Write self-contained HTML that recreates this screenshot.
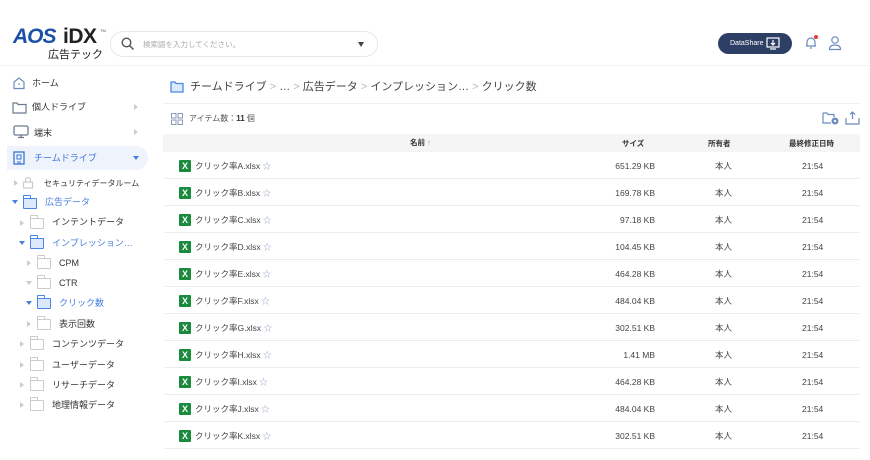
<!DOCTYPE html>
<html><head><meta charset="utf-8"><style>
*{margin:0;padding:0;box-sizing:border-box}
body{width:870px;height:460px;background:#fff;font-family:"Liberation Sans","Noto Sans CJK JP",sans-serif;position:relative;overflow:hidden;color:#333}
.a{position:absolute;white-space:nowrap}
.s{font-size:9px;color:#333;line-height:12px}
.row{position:absolute;left:165px;width:694px;height:27px;border-bottom:1px solid #ececec;font-size:8.5px;color:#444}
.row div{line-height:12px}
.row .x{position:absolute;left:14px;top:8px;width:12px;height:12px;background:#1a8a3c;color:#fff;font-size:9px;font-weight:bold;text-align:center;border-radius:1px}
.row .n{position:absolute;left:30px;top:8px}
.row .sz{position:absolute;right:204px;top:8px}
.row .o{position:absolute;left:550px;top:8px}
.row .t{position:absolute;left:637px;top:8px}
.tri{position:absolute;width:0;height:0}
.tr{border-left:4px solid #ccc;border-top:3px solid transparent;border-bottom:3px solid transparent}
.td{border-top:4px solid #4a7de0;border-left:3px solid transparent;border-right:3px solid transparent}
.tdg{border-top:4px solid #ccc;border-left:3px solid transparent;border-right:3px solid transparent}
.fd{position:absolute;width:14px;height:11px;border:1.3px solid #ccc;border-radius:1px}
.fd:before{content:"";position:absolute;left:-1px;top:-4px;width:6px;height:3px;border:1.3px solid #ccc;border-bottom:none;border-radius:1px 1px 0 0}
.fb{border-color:#4a86e8;background:#dce8fb}
.fb:before{border-color:#4a86e8}
</style></head><body>
<!-- logo -->
<div class="a" style="left:13px;top:26px;font-size:21px;line-height:22px;font-weight:bold;letter-spacing:-1px;font-style:italic;color:#1c4fa8">AOS</div>
<div class="a" style="left:63px;top:26px;font-size:21px;line-height:22px;font-weight:bold;letter-spacing:-0.5px;color:#222">iDX</div>
<div class="a" style="left:100px;top:28px;font-size:4px;color:#555">TM</div>
<div class="a" style="left:48px;top:49px;font-size:11px;line-height:13px;color:#222">広告テック</div>
<!-- search -->
<div class="a" style="left:110px;top:31px;width:268px;height:26px;border:1px solid #e8e8e8;border-radius:13px"></div>
<svg class="a" style="left:121px;top:37px" width="14" height="14" viewBox="0 0 14 14"><circle cx="5.5" cy="5.5" r="4.3" fill="none" stroke="#555" stroke-width="1.4"/><path d="M8.7 8.7L12.5 12.5" stroke="#555" stroke-width="1.5"/></svg>
<div class="a" style="left:143px;top:39px;font-size:7.5px;color:#aaa">検索語を入力してください。</div>
<div class="tri" style="left:358px;top:42px;border-top:5px solid #444;border-left:3.5px solid transparent;border-right:3.5px solid transparent"></div>
<!-- datashare -->
<div class="a" style="left:718px;top:33px;width:74px;height:21px;background:#2e3f66;border-radius:11px"></div>
<div class="a" style="left:730px;top:39px;font-size:7px;line-height:9px;color:#fff">DataShare</div>
<svg class="a" style="left:766px;top:37px" width="14" height="13" viewBox="0 0 14 13"><rect x="1" y="1" width="12" height="9" fill="none" stroke="#fff" stroke-width="1.2"/><path d="M7 3v5M5 6l2 2 2-2M4 12h6" stroke="#fff" stroke-width="1.2" fill="none"/></svg>
<svg class="a" style="left:803px;top:34px" width="16" height="16" viewBox="0 0 16 16"><path d="M4 12V8a4 4 0 018 0v4M3 12h10M7 14h2" fill="none" stroke="#6b8bbf" stroke-width="1.2"/><circle cx="13" cy="3" r="2" fill="#e53935"/></svg>
<svg class="a" style="left:828px;top:35px" width="14" height="16" viewBox="0 0 14 16"><circle cx="7" cy="5" r="3.2" fill="none" stroke="#6b8bbf" stroke-width="1.2"/><path d="M1.5 14.5c0-3.5 2.5-4.5 5.5-4.5s5.5 1 5.5 4.5z" fill="none" stroke="#6b8bbf" stroke-width="1.2"/></svg>
<div class="a" style="left:0;top:65px;width:870px;height:1px;background:#f3f3f3"></div>
<!-- sidebar -->
<svg class="a" style="left:12px;top:76px" width="14" height="14" viewBox="0 0 14 14"><path d="M2 6L7 2l5 4v6.5H2z" fill="none" stroke="#6b8bbf" stroke-width="1.2"/><path d="M6 8h2" stroke="#6b8bbf"/></svg>
<div class="a s" style="left:32px;top:77px">ホーム</div>
<svg class="a" style="left:12px;top:101px" width="15" height="13" viewBox="0 0 15 13"><path d="M1 2h4l1 1.5h8V12H1z" fill="none" stroke="#6b7a90" stroke-width="1.2"/></svg>
<div class="a s" style="left:32px;top:101px">個人ドライブ</div>
<div class="tri tr" style="left:134px;top:104px"></div>
<svg class="a" style="left:13px;top:125px" width="16" height="14" viewBox="0 0 16 14"><rect x="1" y="1" width="14" height="9" rx="1.5" fill="none" stroke="#6b7a90" stroke-width="1.3"/><path d="M5 12.5h6M8 10v2.5" stroke="#6b7a90" stroke-width="1.3"/></svg>
<div class="a s" style="left:34px;top:127px">端末</div>
<div class="tri tr" style="left:134px;top:129px"></div>
<div class="a" style="left:7px;top:146px;width:141px;height:24px;background:#eef3fc;border-radius:0 12px 12px 0"></div>
<svg class="a" style="left:13px;top:151px" width="12" height="14" viewBox="0 0 12 14"><rect x="1" y="1" width="10" height="12" fill="none" stroke="#3a72d8" stroke-width="1.3"/><rect x="4" y="4" width="4" height="4" fill="none" stroke="#3a72d8"/><path d="M5 10v3M7 10v3" stroke="#3a72d8"/></svg>
<div class="a s" style="left:34px;top:152px;color:#3a72d8">チームドライブ</div>
<div class="tri td" style="left:133px;top:156px"></div>
<div class="tri tr" style="left:14px;top:180px"></div>
<svg class="a" style="left:22px;top:176px" width="12" height="13" viewBox="0 0 12 13"><rect x="1.5" y="6" width="9" height="6" fill="none" stroke="#ccc" stroke-width="1.2"/><path d="M3.5 6V4a2.5 2.5 0 015 0v2" fill="none" stroke="#ccc" stroke-width="1.2"/></svg>
<div class="a" style="left:44px;top:178px;font-size:8px;line-height:12px;color:#333">セキュリティデータルーム</div>
<div class="tri td" style="left:12px;top:200px"></div>
<div class="fd fb" style="left:23px;top:198px"></div>
<div class="a s" style="left:45px;top:196px;color:#4a7de0">広告データ</div>
<div class="tri tr" style="left:20px;top:220px"></div><div class="fd" style="left:30px;top:218px"></div>
<div class="a s" style="left:52px;top:216px">インテントデータ</div>
<div class="tri td" style="left:19px;top:241px"></div><div class="fd fb" style="left:30px;top:238px"></div>
<div class="a s" style="left:52px;top:237px;color:#4a7de0">インプレッション…</div>
<div class="tri tr" style="left:27px;top:260px"></div><div class="fd" style="left:37px;top:258px"></div>
<div class="a s" style="left:59px;top:257px">CPM</div>
<div class="tri tdg" style="left:26px;top:281px"></div><div class="fd" style="left:37px;top:278px"></div>
<div class="a s" style="left:59px;top:277px">CTR</div>
<div class="tri td" style="left:26px;top:301px"></div><div class="fd fb" style="left:37px;top:298px"></div>
<div class="a s" style="left:59px;top:297px;color:#4a7de0">クリック数</div>
<div class="tri tr" style="left:27px;top:321px"></div><div class="fd" style="left:37px;top:319px"></div>
<div class="a s" style="left:59px;top:318px">表示回数</div>
<div class="tri tr" style="left:20px;top:341px"></div><div class="fd" style="left:30px;top:339px"></div>
<div class="a s" style="left:52px;top:338px">コンテンツデータ</div>
<div class="tri tr" style="left:20px;top:362px"></div><div class="fd" style="left:30px;top:360px"></div>
<div class="a s" style="left:52px;top:359px">ユーザーデータ</div>
<div class="tri tr" style="left:20px;top:382px"></div><div class="fd" style="left:30px;top:380px"></div>
<div class="a s" style="left:52px;top:379px">リサーチデータ</div>
<div class="tri tr" style="left:20px;top:402px"></div><div class="fd" style="left:30px;top:400px"></div>
<div class="a s" style="left:52px;top:399px">地理情報データ</div>
<!-- breadcrumb -->
<svg class="a" style="left:170px;top:81px" width="14" height="12" viewBox="0 0 14 12"><path d="M1 1h4l1 1.5h7V11H1z" fill="#dce8fb" stroke="#4a86e8" stroke-width="1.3"/></svg>
<div class="a" style="left:190px;top:80px;font-size:11px;line-height:14px;color:#444">チームドライブ <span style="color:#bbb">&gt;</span> … <span style="color:#bbb">&gt;</span> 広告データ <span style="color:#bbb">&gt;</span> インプレッション… <span style="color:#bbb">&gt;</span> クリック数</div>
<div class="a" style="left:163px;top:103px;width:697px;height:1px;background:#efefef"></div>
<svg class="a" style="left:171px;top:113px" width="12" height="12" viewBox="0 0 12 12"><g fill="none" stroke="#8a9ab8"><rect x="0.5" y="0.5" width="4.5" height="4.5"/><rect x="7" y="0.5" width="4.5" height="4.5"/><rect x="0.5" y="7" width="4.5" height="4.5"/><rect x="7" y="7" width="4.5" height="4.5"/></g></svg>
<div class="a" style="left:189px;top:113px;font-size:8px;line-height:12px;color:#555">アイテム数：<b style="color:#333">11</b> 個</div>
<svg class="a" style="left:822px;top:111px" width="18" height="15" viewBox="0 0 18 15"><path d="M1 2h4l1 1.5h6V6M9 12H1V2" fill="none" stroke="#6b8bbf" stroke-width="1.2"/><circle cx="13" cy="10" r="3.5" fill="#6b8bbf"/><circle cx="13" cy="10" r="1.2" fill="#fff"/></svg>
<svg class="a" style="left:845px;top:111px" width="15" height="14" viewBox="0 0 15 14"><path d="M1 7v6h13V7M7.5 1v7M5 3.5l2.5-2.5 2.5 2.5" fill="none" stroke="#6b8bbf" stroke-width="1.2"/></svg>
<div class="a" style="left:163px;top:134px;width:697px;height:18px;background:#f5f5f5"></div>
<div class="a" style="left:410px;top:137px;font-size:7.5px;line-height:11px;color:#333;font-weight:bold">名前 <span style="color:#999">↑</span></div>
<div class="a" style="left:622px;top:138px;font-size:7.5px;line-height:11px;font-weight:bold">サイズ</div>
<div class="a" style="left:708px;top:138px;font-size:7.5px;line-height:11px;font-weight:bold">所有者</div>
<div class="a" style="left:789px;top:138px;font-size:7.5px;line-height:11px;font-weight:bold">最終修正日時</div>
<div class="row" style="top:152px"><div class="x">X</div><div class="n">クリック率A.xlsx <span style="color:#8aa0c8">☆</span></div><div class="sz">651.29 KB</div><div class="o">本人</div><div class="t">21:54</div></div>
<div class="row" style="top:179px"><div class="x">X</div><div class="n">クリック率B.xlsx <span style="color:#8aa0c8">☆</span></div><div class="sz">169.78 KB</div><div class="o">本人</div><div class="t">21:54</div></div>
<div class="row" style="top:206px"><div class="x">X</div><div class="n">クリック率C.xlsx <span style="color:#8aa0c8">☆</span></div><div class="sz">97.18 KB</div><div class="o">本人</div><div class="t">21:54</div></div>
<div class="row" style="top:233px"><div class="x">X</div><div class="n">クリック率D.xlsx <span style="color:#8aa0c8">☆</span></div><div class="sz">104.45 KB</div><div class="o">本人</div><div class="t">21:54</div></div>
<div class="row" style="top:260px"><div class="x">X</div><div class="n">クリック率E.xlsx <span style="color:#8aa0c8">☆</span></div><div class="sz">464.28 KB</div><div class="o">本人</div><div class="t">21:54</div></div>
<div class="row" style="top:287px"><div class="x">X</div><div class="n">クリック率F.xlsx <span style="color:#8aa0c8">☆</span></div><div class="sz">484.04 KB</div><div class="o">本人</div><div class="t">21:54</div></div>
<div class="row" style="top:314px"><div class="x">X</div><div class="n">クリック率G.xlsx <span style="color:#8aa0c8">☆</span></div><div class="sz">302.51 KB</div><div class="o">本人</div><div class="t">21:54</div></div>
<div class="row" style="top:341px"><div class="x">X</div><div class="n">クリック率H.xlsx <span style="color:#8aa0c8">☆</span></div><div class="sz">1.41 MB</div><div class="o">本人</div><div class="t">21:54</div></div>
<div class="row" style="top:368px"><div class="x">X</div><div class="n">クリック率I.xlsx <span style="color:#8aa0c8">☆</span></div><div class="sz">464.28 KB</div><div class="o">本人</div><div class="t">21:54</div></div>
<div class="row" style="top:395px"><div class="x">X</div><div class="n">クリック率J.xlsx <span style="color:#8aa0c8">☆</span></div><div class="sz">484.04 KB</div><div class="o">本人</div><div class="t">21:54</div></div>
<div class="row" style="top:422px"><div class="x">X</div><div class="n">クリック率K.xlsx <span style="color:#8aa0c8">☆</span></div><div class="sz">302.51 KB</div><div class="o">本人</div><div class="t">21:54</div></div>
</body></html>
